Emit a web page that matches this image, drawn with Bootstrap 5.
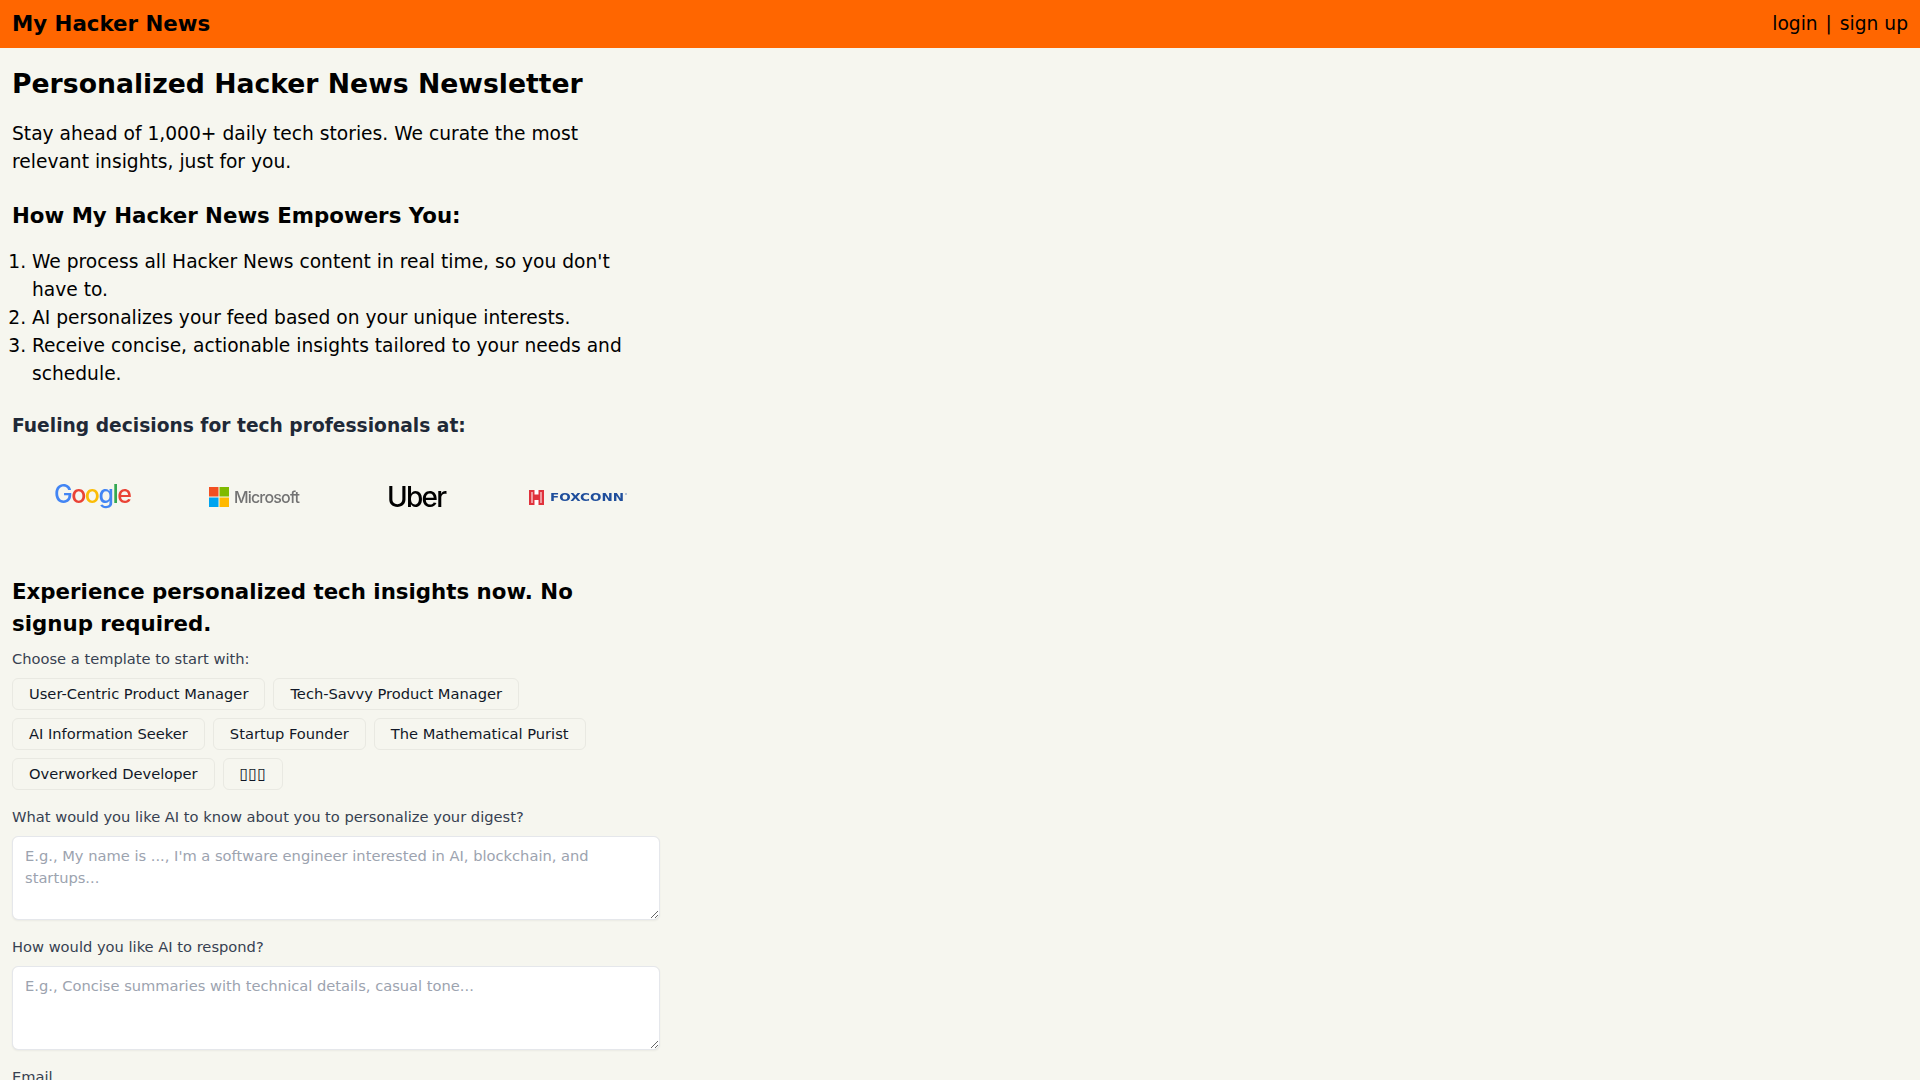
<!DOCTYPE html>
<html lang="en">
<head>
  <meta charset="UTF-8" />
  <meta name="viewport" content="width=device-width, initial-scale=1.0"/>
  <title>My Hacker News</title>
  <link href="https://cdn.jsdelivr.net/npm/bootstrap@5.3.0/dist/css/bootstrap.min.css" rel="stylesheet"/>
  <style>
    body {
      background-color: #f6f6ef;
      color: #000;
      font-family: "DejaVu Sans", sans-serif;
    }
    .hn-bar {
      background-color: #ff6600;
      height: 48px;
      padding: 0 12px;
    }
    .hn-brand {
      font-size: 21.33px;
      font-weight: 700;
      color: #000;
    }
    .hn-links {
      font-size: 18.67px;
      color: #000;
    }
    .hn-links a {
      color: #000;
      text-decoration: none;
    }
    .hn-sep {
      margin: 0 2px;
    }
    .hn-main {
      width: 672px;
      padding: 0 12px;
    }
    .hn-title {
      font-size: 26.67px;
      line-height: 40px;
      font-weight: 700;
      margin: 16px 0 16px;
    }
    .hn-text {
      font-size: 18.67px;
      line-height: 28px;
      margin-bottom: 26px;
    }
    .hn-sub {
      font-size: 21.33px;
      line-height: 28px;
      font-weight: 700;
      margin-bottom: 18px;
    }
    .hn-steps {
      font-size: 18.67px;
      line-height: 28px;
      padding-left: 20px;
      margin-bottom: 24px;
    }
    .hn-fuel {
      font-size: 18.67px;
      line-height: 28px;
      font-weight: 700;
      color: #1f2937;
      margin-bottom: 0;
    }
    .hn-logos {
      height: 113px;
      margin-bottom: 23px;
    }
    .hn-logos svg {
      overflow: visible;
      filter: blur(0.35px);
    }
    .hn-try {
      font-size: 21.33px;
      line-height: 32px;
      font-weight: 700;
      margin: 0 0 9px;
    }
    .hn-label {
      display: block;
      font-size: 14.67px;
      line-height: 20px;
      color: #374151;
      margin-bottom: 9px;
    }
    .hn-tpl {
      font-size: 14.67px;
      line-height: 20px;
      padding: 5px 16px;
      color: #111827;
      background: #f6f6ef;
      border: 1px solid #e9e9e2;
      border-radius: 6px;
    }
    .hn-tpl:hover {
      background: #f0f0e8;
    }
    .hn-tofu {
      font-size: 16px;
    }
    .hn-field {
      font-size: 14.67px;
      line-height: 22px;
      height: 84px;
      padding: 8px 12px;
      border: 1px solid #e5e7eb;
      border-radius: 6px;
      box-shadow: 0 1px 2px rgba(0,0,0,0.05);
    }
    .hn-field::placeholder {
      color: #9ca3af;
      opacity: 1;
    }
    .hn-group {
      margin-bottom: 17px;
    }
  </style>
</head>
<body>
  <nav class="navbar hn-bar d-flex justify-content-between align-items-center">
    <span class="hn-brand">My Hacker News</span>
    <div class="hn-links"><a href="#">login</a> <span class="hn-sep">|</span> <a href="#">sign up</a></div>
  </nav>

  <main class="hn-main">
    <h1 class="hn-title">Personalized Hacker News Newsletter</h1>
    <p class="hn-text">Stay ahead of 1,000+ daily tech stories. We curate the most relevant insights, just for you.</p>

    <h2 class="hn-sub">How My Hacker News Empowers You:</h2>
    <ol class="hn-steps">
      <li>We process all Hacker News content in real time, so you don't have to.</li>
      <li>AI personalizes your feed based on your unique interests.</li>
      <li>Receive concise, actionable insights tailored to your needs and schedule.</li>
    </ol>

    <h3 class="hn-fuel">Fueling decisions for tech professionals at:</h3>
    <div class="row g-0 align-items-center hn-logos">
      <div class="col-3">
        <svg class="d-block mx-auto" width="82" height="40" viewBox="0 0 82 40" role="img" aria-label="Google">
          <text x="2" y="26" font-family="Inter, sans-serif" font-size="25" font-weight="500" textLength="78"><tspan fill="#4285f4">G</tspan><tspan fill="#ea4335">o</tspan><tspan fill="#fbbc05">o</tspan><tspan fill="#4285f4">g</tspan><tspan fill="#34a853">l</tspan><tspan fill="#ea4335">e</tspan></text>
        </svg>
      </div>
      <div class="col-3">
        <svg class="d-block mx-auto" width="92" height="24" viewBox="0 0 92 24" role="img" aria-label="Microsoft">
          <rect x="0" y="2" width="9.5" height="9.5" fill="#f25022"/>
          <rect x="10.5" y="2" width="9.5" height="9.5" fill="#7fba00"/>
          <rect x="0" y="12.5" width="9.5" height="9.5" fill="#00a4ef"/>
          <rect x="10.5" y="12.5" width="9.5" height="9.5" fill="#ffb900"/>
          <text x="25" y="18" font-family="Inter, sans-serif" font-size="16" font-weight="500" fill="#737373" textLength="66">Microsoft</text>
        </svg>
      </div>
      <div class="col-3">
        <svg class="d-block mx-auto" width="62" height="32" viewBox="0 0 62 32" role="img" aria-label="Uber">
          <text x="1" y="26" font-family="Inter, sans-serif" font-size="28" font-weight="500" fill="#000" textLength="60">Uber</text>
        </svg>
      </div>
      <div class="col-3">
        <svg class="d-block mx-auto" width="100" height="20" viewBox="0 0 100 20" role="img" aria-label="Foxconn">
          <rect x="0" y="3" width="15" height="15" fill="#e0323c"/>
          <rect x="5.5" y="3" width="4" height="4.5" fill="#fff"/>
          <rect x="5.5" y="13" width="4" height="5" fill="#fff"/>
          <rect x="2.5" y="5" width="1" height="11" fill="#fff"/>
          <rect x="11.5" y="5" width="1" height="11" fill="#fff"/>
          <text x="21" y="14" font-family="DejaVu Sans, sans-serif" font-size="11" font-weight="700" fill="#1f4e9c" textLength="74" lengthAdjust="spacingAndGlyphs">FOXCONN</text>
          <circle cx="97" cy="7" r="1" fill="#9fb3d0"/>
        </svg>
      </div>
    </div>

    <h2 class="hn-try">Experience personalized tech insights now. No signup required.</h2>

    <div class="hn-group">
      <span class="hn-label">Choose a template to start with:</span>
      <div class="d-flex flex-wrap gap-2">
        <button type="button" class="btn hn-tpl">User-Centric Product Manager</button>
        <button type="button" class="btn hn-tpl">Tech-Savvy Product Manager</button>
      </div>
      <div class="d-flex flex-wrap gap-2 mt-2">
        <button type="button" class="btn hn-tpl">AI Information Seeker</button>
        <button type="button" class="btn hn-tpl">Startup Founder</button>
        <button type="button" class="btn hn-tpl">The Mathematical Purist</button>
      </div>
      <div class="d-flex flex-wrap gap-2 mt-2">
        <button type="button" class="btn hn-tpl">Overworked Developer</button>
        <button type="button" class="btn hn-tpl"><span class="hn-tofu">▯▯▯</span></button>
      </div>
    </div>

    <div class="hn-group">
      <label class="hn-label" for="about">What would you like AI to know about you to personalize your digest?</label>
      <textarea id="about" class="form-control hn-field" placeholder="E.g., My name is ..., I'm a software engineer interested in AI, blockchain, and startups..."></textarea>
    </div>
    <div class="hn-group">
      <label class="hn-label" for="style">How would you like AI to respond?</label>
      <textarea id="style" class="form-control hn-field" placeholder="E.g., Concise summaries with technical details, casual tone..."></textarea>
    </div>
    <div class="hn-group">
      <label class="hn-label" for="email">Email</label>
      <input id="email" type="email" class="form-control hn-field">
    </div>
  </main>
  <script src="https://cdn.jsdelivr.net/npm/bootstrap@5.3.0/dist/js/bootstrap.bundle.min.js"></script>
</body>
</html>
